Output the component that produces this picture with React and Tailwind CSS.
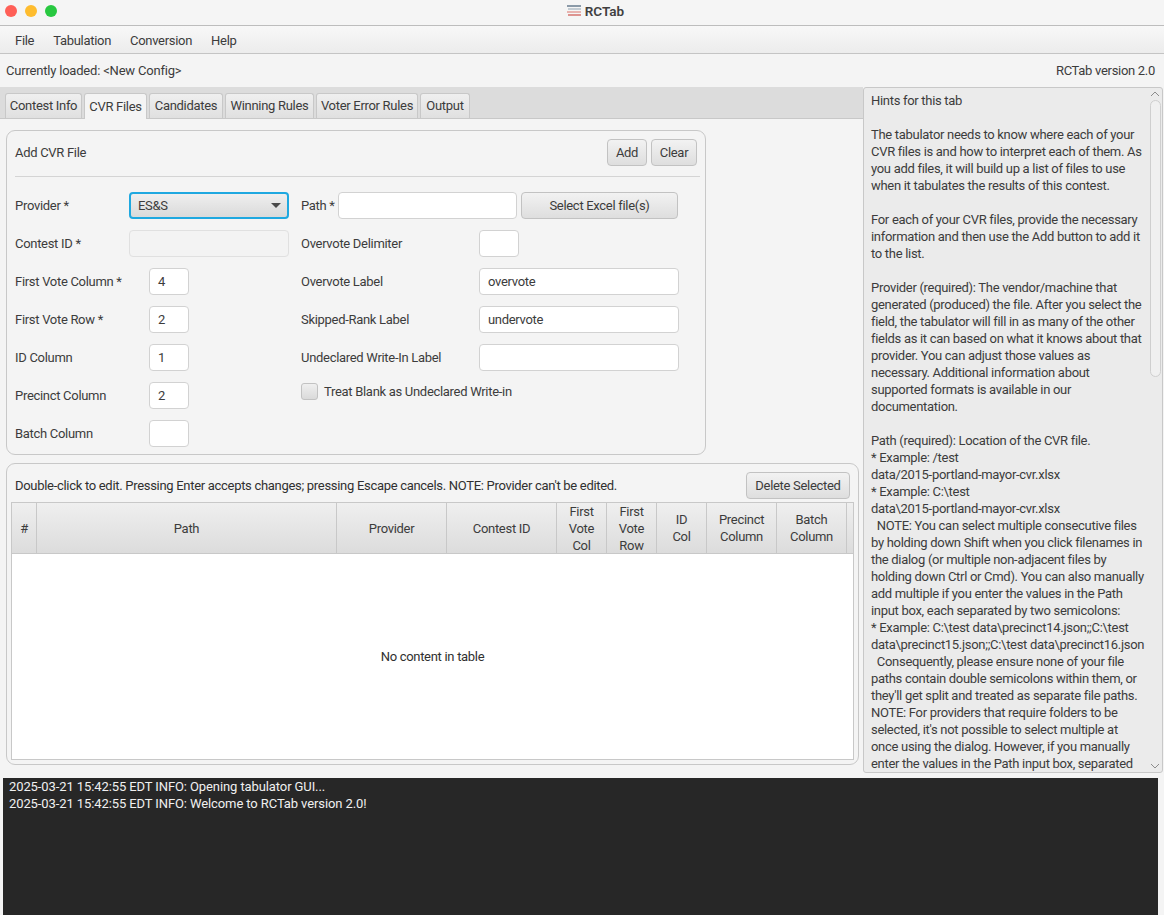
const hints = [
  "Hints for this tab",
  "",
  "The tabulator needs to know where each of your",
  "CVR files is and how to interpret each of them. As",
  "you add files, it will build up a list of files to use",
  "when it tabulates the results of this contest.",
  "",
  "For each of your CVR files, provide the necessary",
  "information and then use the Add button to add it",
  "to the list.",
  "",
  "Provider (required): The vendor/machine that",
  "generated (produced) the file. After you select the",
  "field, the tabulator will fill in as many of the other",
  "fields as it can based on what it knows about that",
  "provider. You can adjust those values as",
  "necessary. Additional information about",
  "supported formats is available in our",
  "documentation.",
  "",
  "Path (required): Location of the CVR file.",
  "* Example: /test",
  "data/2015-portland-mayor-cvr.xlsx",
  "* Example: C:\\test",
  "data\\2015-portland-mayor-cvr.xlsx",
  "  NOTE: You can select multiple consecutive files",
  "by holding down Shift when you click filenames in",
  "the dialog (or multiple non-adjacent files by",
  "holding down Ctrl or Cmd). You can also manually",
  "add multiple if you enter the values in the Path",
  "input box, each separated by two semicolons:",
  "* Example: C:\\test data\\precinct14.json;;C:\\test",
  "data\\precinct15.json;;C:\\test data\\precinct16.json",
  "  Consequently, please ensure none of your file",
  "paths contain double semicolons within them, or",
  "they'll get split and treated as separate file paths.",
  "NOTE: For providers that require folders to be",
  "selected, it's not possible to select multiple at",
  "once using the dialog. However, if you manually",
  "enter the values in the Path input box, separated",
];

const tabs = [
  { label: "Contest Info", w: "w-[77px]" },
  { label: "CVR Files", w: "w-[63px]" },
  { label: "Candidates", w: "w-[74px]" },
  { label: "Winning Rules", w: "w-[89px]" },
  { label: "Voter Error Rules", w: "w-[102px]" },
  { label: "Output", w: "w-[50px]" },
];

const columns = [
  { w: "w-[25px]", label: ["#"] },
  { w: "w-[300px]", label: ["Path"] },
  { w: "w-[110px]", label: ["Provider"] },
  { w: "w-[110px]", label: ["Contest ID"] },
  { w: "w-[50px]", label: ["First", "Vote", "Col"] },
  { w: "w-[50px]", label: ["First", "Vote", "Row"] },
  { w: "w-[50px]", label: ["ID", "Col"] },
  { w: "w-[70px]", label: ["Precinct", "Column"] },
  { w: "w-[70px]", label: ["Batch", "Column"] },
];

function Button({ className = "", children }) {
  return (
    <button className={`h-[27px] whitespace-nowrap rounded-[4px] border border-[#c2c2c2] bg-gradient-to-b from-[#f2f2f2] to-[#dedede] text-[#3c3c3c] ${className}`}>
      {children}
    </button>
  );
}

function Input({ className = "", value, disabled }) {
  return (
    <div className={`flex h-[27px] items-center rounded-[4px] border px-2 text-[#3c3c3c] ${disabled ? "border-[#e0e0e0] bg-[#f3f3f3]" : "border-[#d2d2d2] bg-white"} ${className}`}>
      {value}
    </div>
  );
}

function Row({ label, children, labelWidth = "w-[114px]" }) {
  return (
    <div className="flex h-[38px] items-center">
      <span className={`shrink-0 whitespace-nowrap ${labelWidth}`}>{label}</span>
      {children}
    </div>
  );
}

export default function App() {
  return (
    <div
      className="flex h-[915px] w-[1164px] flex-col overflow-hidden bg-[#f4f4f4] text-[13px] leading-[17px] tracking-[-0.3px] text-[#3c3c3c]"
      style={{ fontFamily: "Roboto, 'Liberation Sans', sans-serif" }}
    >
      {/* title bar */}
      <div className="relative flex h-[26px] shrink-0 items-center justify-center border-b border-[#bdbdbd] bg-[#f5f5f5]">
        <div className="absolute left-[5px] top-[5px] flex gap-2">
          <span className="h-3 w-3 rounded-full bg-[#ff5f57]" />
          <span className="h-3 w-3 rounded-full bg-[#febc2e]" />
          <span className="h-3 w-3 rounded-full bg-[#28c840]" />
        </div>
        <div className="mb-[3px] ml-[27px] flex items-center gap-[4px] text-[13.5px] font-semibold tracking-normal text-[#404040]">
          <svg width="14" height="12" viewBox="0 0 14 12">
            <rect x="0" y="0" width="14" height="2" fill="#8b9aa8" />
            <rect x="1" y="3" width="13" height="2" fill="#c3ccd3" />
            <rect x="0" y="6" width="14" height="2" fill="#e8b4b0" />
            <rect x="1" y="9" width="13" height="2" fill="#dd9490" />
          </svg>
          RCTab
        </div>
      </div>

      {/* menu bar */}
      <div className="flex h-[28px] shrink-0 items-center gap-[19px] border-b border-[#c4c4c4] bg-gradient-to-b from-[#f8f8f8] to-[#ececec] pl-[15px] pt-[2px]">
        <span>File</span>
        <span>Tabulation</span>
        <span>Conversion</span>
        <span>Help</span>
      </div>

      {/* status */}
      <div className="flex h-[33px] shrink-0 items-center justify-between pl-[6px] pr-[9px]">
        <span className="tracking-[-0.2px]">Currently loaded: &lt;New Config&gt;</span>
        <span>RCTab version 2.0</span>
      </div>

      <div className="flex h-[685px] shrink-0">
        {/* left side */}
        <div className="flex w-[863px] shrink-0 flex-col">
          <div className="flex h-[32px] shrink-0 items-end gap-[2px] border-b border-[#c8c8c8] bg-[#dcdcdc] pl-[5px]">
            {tabs.map((tab) =>
              tab.label === "CVR Files" ? (
                <div key={tab.label} className={`-mb-px flex h-[26px] items-center justify-center whitespace-nowrap rounded-t-[3px] border border-b-0 border-[#c8c8c8] bg-[#f4f4f4] pb-[1px] ${tab.w}`}>
                  {tab.label}
                </div>
              ) : (
                <div key={tab.label} className={`flex h-[25px] items-center justify-center whitespace-nowrap rounded-t-[3px] border border-b-0 border-[#c8c8c8] bg-gradient-to-b from-[#efefef] to-[#e0e0e0] pb-[1px] ${tab.w}`}>
                  {tab.label}
                </div>
              )
            )}
          </div>

          {/* add cvr panel */}
          <div className="ml-[6px] mt-[11px] h-[325px] w-[700px] shrink-0 rounded-[9px] border border-[#c8c8c8] pl-[8px] pr-[5px]">
            <div className="flex h-[46px] items-center justify-between border-b border-[#d4d4d4] pr-[3px]">
              <span className="pb-[2px]">Add CVR File</span>
              <div className="flex gap-[4px] pb-[2px]">
                <Button className="w-[40px]">Add</Button>
                <Button className="w-[46px]">Clear</Button>
              </div>
            </div>
            <div className="mt-[9px] flex">
              <div className="w-[286px] shrink-0">
                <Row label="Provider *">
                  <div className="flex h-[27px] w-[160px] items-center justify-between rounded-[4px] border-2 border-[#1fa8e0] bg-gradient-to-b from-[#efefef] to-[#dadada] pl-[7px] pr-[6px]">
                    ES&amp;S
                    <span className="h-0 w-0 border-x-[5px] border-t-[5px] border-x-transparent border-t-[#4a4a4a]" />
                  </div>
                </Row>
                <Row label="Contest ID *">
                  <Input className="w-[160px]" disabled />
                </Row>
                <Row label="First Vote Column *" labelWidth="w-[134px]">
                  <Input className="w-[40px]" value="4" />
                </Row>
                <Row label="First Vote Row *" labelWidth="w-[134px]">
                  <Input className="w-[40px]" value="2" />
                </Row>
                <Row label="ID Column" labelWidth="w-[134px]">
                  <Input className="w-[40px]" value="1" />
                </Row>
                <Row label="Precinct Column" labelWidth="w-[134px]">
                  <Input className="w-[40px]" value="2" />
                </Row>
                <Row label="Batch Column" labelWidth="w-[134px]">
                  <Input className="w-[40px]" />
                </Row>
              </div>
              <div className="flex-1">
                <Row label="Path *" labelWidth="w-[37px]">
                  <Input className="w-[179px]" />
                  <Button className="ml-[4px] w-[157px]">Select Excel file(s)</Button>
                </Row>
                <Row label="Overvote Delimiter" labelWidth="w-[178px]">
                  <Input className="w-[40px]" />
                </Row>
                <Row label="Overvote Label" labelWidth="w-[178px]">
                  <Input className="w-[200px]" value="overvote" />
                </Row>
                <Row label="Skipped-Rank Label" labelWidth="w-[178px]">
                  <Input className="w-[200px]" value="undervote" />
                </Row>
                <Row label="Undeclared Write-In Label" labelWidth="w-[178px]">
                  <Input className="w-[200px]" />
                </Row>
                <div className="-mt-[4px] flex h-[38px] items-center gap-[6px]">
                  <span className="h-[17px] w-[17px] rounded-[3px] border border-[#c2c2c2] bg-gradient-to-b from-[#efefef] to-[#dadada]" />
                  Treat Blank as Undeclared Write-in
                </div>
              </div>
            </div>
          </div>

          {/* table panel */}
          <div className="ml-[6px] mt-[8px] flex h-[302px] w-[853px] shrink-0 flex-col rounded-[9px] border border-[#c8c8c8] px-[4px] pb-[4px]">
            <div className="flex h-[38px] shrink-0 items-center justify-between pl-[4px] pr-[4px] pt-[4px]">
              <span className="text-[#303030]">
                Double-click to edit. Pressing Enter accepts changes; pressing Escape cancels. NOTE: Provider can't be edited.
              </span>
              <Button className="w-[104px]">Delete Selected</Button>
            </div>
            <div className="flex min-h-0 flex-1 flex-col border border-[#c8c8c8] bg-white">
              <div className="flex h-[51px] shrink-0 border-b border-[#c8c8c8] bg-gradient-to-b from-[#efefef] to-[#dcdcdc]">
                {columns.map((col) => (
                  <div key={col.label.join(" ")} className={`flex shrink-0 flex-col items-center justify-center border-r border-[#c8c8c8] ${col.w}`}>
                    {col.label.map((line) => (
                      <span key={line}>{line}</span>
                    ))}
                  </div>
                ))}
              </div>
              <div className="flex flex-1 items-center justify-center text-[#303030]">No content in table</div>
            </div>
          </div>
        </div>

        {/* hints */}
        <div className="relative flex h-[686px] w-[300px] shrink-0 rounded-[3px] border border-[#c8c8c8] bg-[#ebebeb]">
          <div className="h-full flex-1 overflow-hidden pl-[7px] pt-[4px]">
            {hints.map((line, i) => (
              <div key={i} className="h-[17px] whitespace-pre">
                {line}
              </div>
            ))}
          </div>
          <div className="flex w-[14px] shrink-0 flex-col items-center">
            <svg className="mt-[2px] shrink-0" width="10" height="8" viewBox="0 0 10 8" fill="none" stroke="#8c8c8c" strokeWidth="1">
              <path d="M1 6 L5 2 L9 6" />
            </svg>
            <div className="mt-[2px] h-[277px] w-[11px] rounded-full border border-[#cfcfcf] bg-[#f0f0f0]" />
            <svg className="mb-[2px] mt-auto shrink-0" width="10" height="8" viewBox="0 0 10 8" fill="none" stroke="#8c8c8c" strokeWidth="1">
              <path d="M1 2 L5 6 L9 2" />
            </svg>
          </div>
        </div>
      </div>

      {/* console */}
      <div className="ml-[3px] mt-[6px] w-[1155px] flex-1 bg-[#272727] pl-[6px] tracking-[-0.1px] text-[#f0f0f0]">
        <div>2025-03-21 15:42:55 EDT INFO: Opening tabulator GUI...</div>
        <div>2025-03-21 15:42:55 EDT INFO: Welcome to RCTab version 2.0!</div>
      </div>
    </div>
  );
}
